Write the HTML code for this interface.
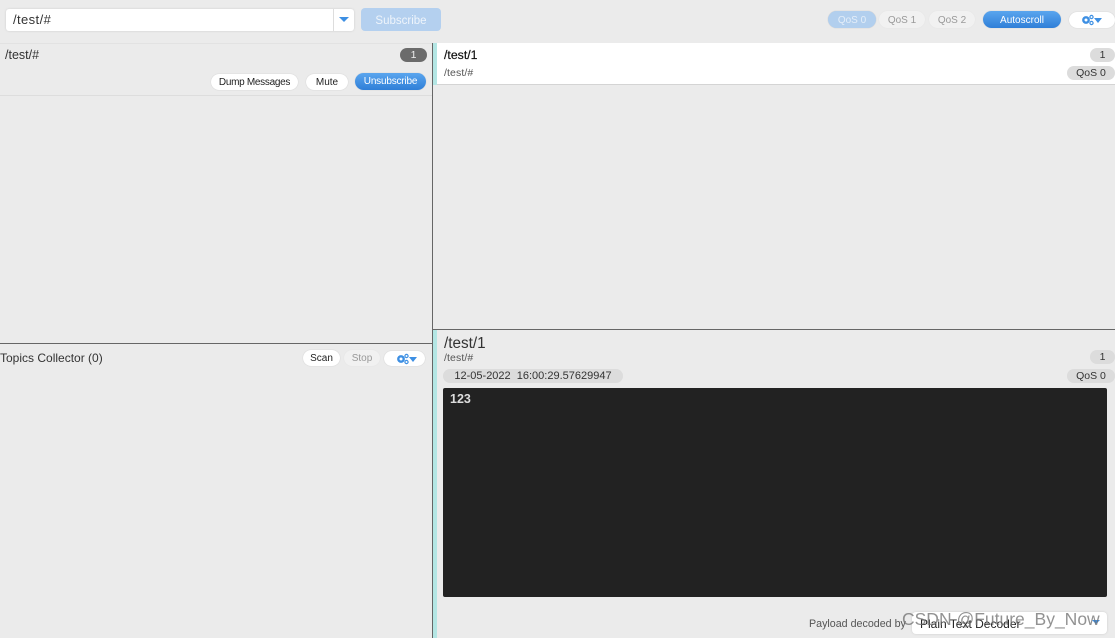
<!DOCTYPE html>
<html><head><meta charset="utf-8"><style>
html,body{margin:0;padding:0}
body{width:1115px;height:638px;background:#ebebeb;position:relative;overflow:hidden;font-family:"Liberation Sans",sans-serif;color:#333}
.a{position:absolute;box-sizing:border-box}
.t{position:absolute;white-space:nowrap;line-height:14px}
.b{position:absolute;box-sizing:border-box;text-align:center;border-radius:9px;background:#fff;color:#222;font-size:10px;box-shadow:0 0 1px #bbb;white-space:nowrap;padding-top:1px}
.blue{background:linear-gradient(#5aa5ee,#2f7fd8);color:#fff}
.g{background:#f1f1f1;color:#999;box-shadow:0 0 1px #ddd}
.p{position:absolute;box-sizing:border-box;background:#dcdcdc;border-radius:8px;text-align:center;font-size:10.5px;color:#333;white-space:nowrap}
</style></head><body>
<div class="a" style="left:6px;top:9px;width:348px;height:22px;background:#fff;border-radius:3px;box-shadow:0 0 2px #ccc"></div>
<div class="a" style="left:333px;top:9px;width:1px;height:22px;background:#ddd"></div>
<svg class="a" style="left:339px;top:17px" width="11" height="6"><path d="M0 0H10L5 5Z" fill="#3d8fe3"/></svg>
<div class="t" style="left:13px;top:13px;font-size:13px;letter-spacing:.4px">/test/#</div>
<div class="b" style="left:361px;top:8px;width:80px;height:23px;line-height:24px;background:#b4d0ef;color:#eef4fb;font-size:11.5px;border-radius:4px;box-shadow:none">Subscribe</div>

<div class="b" style="left:828px;top:11px;width:48px;height:17px;line-height:17px;background:#b2cfee;color:#e4eef9">QoS 0</div>
<div class="b g" style="left:879px;top:11px;width:46px;height:17px;line-height:17px">QoS 1</div>
<div class="b g" style="left:929px;top:11px;width:46px;height:17px;line-height:17px">QoS 2</div>
<div class="b blue" style="left:983px;top:11px;width:78px;height:17px;line-height:17px">Autoscroll</div>
<div class="b" style="left:1069px;top:12px;width:46px;height:16px"></div>
<svg class="a" style="left:1081px;top:14px" width="22" height="12"><circle cx="5" cy="6" r="2.7" fill="none" stroke="#3d8fe3" stroke-width="2.4"/><circle cx="10.5" cy="3" r="1.6" fill="none" stroke="#3d8fe3" stroke-width="1.2"/><circle cx="10.5" cy="9" r="1.6" fill="none" stroke="#3d8fe3" stroke-width="1.2"/><path d="M13 4H21L17 9Z" fill="#3d8fe3"/></svg>

<div class="a" style="left:0;top:43px;width:432px;height:1px;background:#e2e2e2"></div>
<div class="t" style="left:5px;top:48px;font-size:12.5px">/test/#</div>
<div class="p" style="left:400px;top:48px;width:27px;height:14px;line-height:14px;background:#6b6b6b;color:#eee">1</div>
<div class="b" style="left:211px;top:74px;width:87px;height:16px;line-height:15px;letter-spacing:-.3px">Dump Messages</div>
<div class="b" style="left:306px;top:74px;width:42px;height:16px;line-height:15px">Mute</div>
<div class="b blue" style="left:355px;top:73px;width:71px;height:17px;line-height:16px;letter-spacing:-.2px">Unsubscribe</div>
<div class="a" style="left:0;top:95px;width:432px;height:1px;background:#ddd"></div>

<div class="a" style="left:0;top:343px;width:432px;height:1px;background:#666"></div>
<div class="t" style="left:0;top:351px;font-size:12px;letter-spacing:0">Topics Collector (0)</div>
<div class="b" style="left:303px;top:350px;width:37px;height:16px;line-height:15px">Scan</div>
<div class="b g" style="left:344px;top:350px;width:36px;height:16px;line-height:15px">Stop</div>
<div class="b" style="left:384px;top:351px;width:41px;height:15px"></div>
<svg class="a" style="left:396px;top:353px" width="22" height="12"><circle cx="5" cy="6" r="2.7" fill="none" stroke="#3d8fe3" stroke-width="2.4"/><circle cx="10.5" cy="3" r="1.6" fill="none" stroke="#3d8fe3" stroke-width="1.2"/><circle cx="10.5" cy="9" r="1.6" fill="none" stroke="#3d8fe3" stroke-width="1.2"/><path d="M13 4H21L17 9Z" fill="#3d8fe3"/></svg>

<div class="a" style="left:432px;top:43px;width:1px;height:595px;background:#666"></div>
<div class="a" style="left:433px;top:43px;width:4px;height:42px;background:#b4e6e4"></div>
<div class="a" style="left:437px;top:43px;width:678px;height:42px;background:#fff;border-bottom:1px solid #d4d4d4"></div>
<div class="t" style="left:444px;top:48px;font-size:12.3px;color:#111;-webkit-text-stroke:.2px #111">/test/1</div>
<div class="t" style="left:444px;top:66px;font-size:10.5px;letter-spacing:.1px;color:#555">/test/#</div>
<div class="p" style="left:1090px;top:48px;width:25px;height:14px;line-height:14px">1</div>
<div class="p" style="left:1067px;top:66px;width:48px;height:14px;line-height:14px">QoS 0</div>

<div class="a" style="left:433px;top:329px;width:682px;height:1px;background:#666"></div>
<div class="a" style="left:433px;top:330px;width:4px;height:308px;background:#b4e6e4"></div>
<div class="t" style="left:444px;top:337px;font-size:15.3px;color:#333">/test/1</div>
<div class="t" style="left:444px;top:351px;font-size:10.5px;letter-spacing:.1px;color:#555">/test/#</div>
<div class="p" style="left:1090px;top:350px;width:25px;height:14px;line-height:14px">1</div>
<div class="p" style="left:443px;top:369px;width:180px;height:14px;line-height:14px;font-size:11px">12-05-2022&nbsp; 16:00:29.57629947</div>
<div class="p" style="left:1067px;top:369px;width:48px;height:14px;line-height:14px">QoS 0</div>
<div class="a" style="left:443px;top:388px;width:664px;height:209px;background:#222;border-radius:2px"></div>
<div class="t" style="left:450px;top:392px;font-size:12.5px;font-weight:bold;color:#ddd">123</div>

<div class="t" style="left:809px;top:617px;font-size:10.7px;color:#555">Payload decoded by</div>
<div class="a" style="left:912px;top:612px;width:195px;height:22px;background:#fff;border-radius:4px;box-shadow:0 0 2px #ccc"></div>
<div class="t" style="left:920px;top:617px;font-size:12px;color:#222">Plain Text Decoder</div>
<svg class="a" style="left:1092px;top:620px" width="9" height="5"><path d="M0 0H8L4 4Z" fill="#3d8fe3"/></svg>
<div class="t" style="left:902px;top:610px;font-size:17.5px;line-height:18px;color:rgba(110,110,110,.75)">CSDN @Future_By_Now</div>
</body></html>
